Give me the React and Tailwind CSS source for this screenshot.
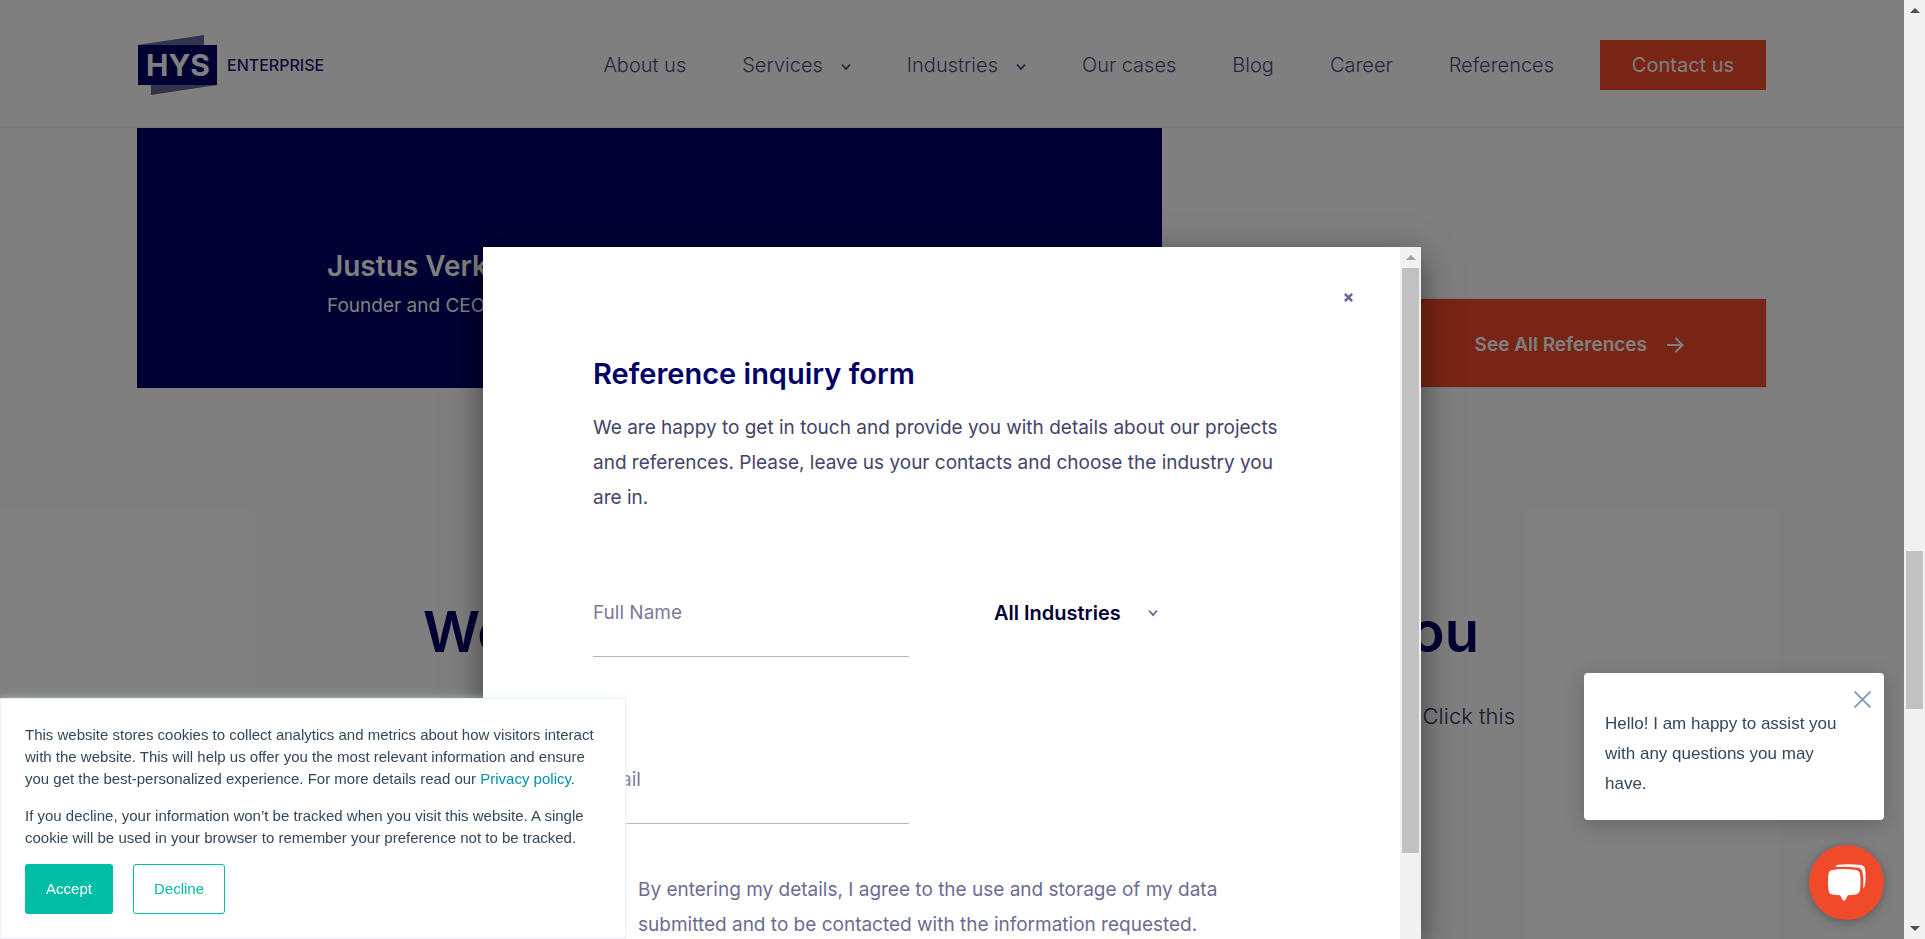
import React from "react";

const navItems = [
  { label: "About us" },
  { label: "Services", menu: true },
  { label: "Industries", menu: true },
  { label: "Our cases" },
  { label: "Blog" },
  { label: "Career" },
  { label: "References" },
];

function Chevron({ className }) {
  return (
    <svg viewBox="0 0 10 8" className={className} fill="none" stroke="currentColor" strokeWidth="1.8" aria-hidden="true">
      <path d="M1 1.5 L5 6.2 L9 1.5" />
    </svg>
  );
}

function Logo() {
  return (
    <a href="#home" className="block" aria-label="HYS Enterprise">
      <svg viewBox="0 0 192 60" className="block h-[60px] w-[192px]">
        <path d="M0 10 L66 0 V10 Z" fill="#666699" />
        <path d="M13 50 H79 L13 60 Z" fill="#666699" />
        <rect x="0" y="10" width="79" height="40" fill="#000066" />
        <text x="40" y="41" textAnchor="middle" fontFamily="Inter, sans-serif" fontWeight="700" fontSize="30" fill="#ffffff">
          HYS
        </text>
        <text x="89" y="36" fontFamily="Inter, sans-serif" fontWeight="500" fontSize="16" fill="#1a1a70">
          ENTERPRISE
        </text>
      </svg>
    </a>
  );
}

function Header() {
  return (
    <header className="flex h-32 shrink-0 items-center justify-between border-b border-[#f2f2f2] px-[138px] pb-[2px] pt-1">
      <Logo />
      <nav className="flex items-center gap-[46px]">
        <ul className="flex items-center gap-14 text-[20px] font-light leading-6 text-[#4d4d80]">
          {navItems.map((item) => (
            <li key={item.label}>
              <a href="#nav" className="flex items-center gap-[18px] whitespace-nowrap">
                {item.label}
                {item.menu && <Chevron className="mt-1 h-2 w-[10px]" />}
              </a>
            </li>
          ))}
        </ul>
        <a
          href="#contact"
          className="flex h-[50px] w-[166px] items-center justify-center bg-[#f04a2a] text-[20px] text-white"
        >
          Contact us
        </a>
      </nav>
    </header>
  );
}

function PageContent() {
  return (
    <main className="flex flex-1 flex-col overflow-hidden">
      <section className="flex items-end justify-between px-[137px]">
        <div className="flex h-[260px] w-full max-w-[1025px] flex-col bg-[#000066] pl-[190px] pt-[118px] text-white">
          <p className="text-[28px] font-semibold leading-10">Justus Verkuijl</p>
          <p className="mt-1 text-[19px] leading-8">Founder and CEO</p>
        </div>
        <a
          href="#references"
          className="flex h-[90px] w-[400px] items-center justify-end gap-5 border border-[#e8e4f4] bg-[#f04a2a] pr-[82px] pt-1 text-[19px] font-semibold text-white"
        >
          See All References
          <svg viewBox="0 0 17 16" className="h-4 w-[17px]" fill="none" stroke="currentColor" strokeWidth="2" aria-hidden="true">
            <path d="M0 8 H15 M8.5 1 L15.5 8 L8.5 15" />
          </svg>
        </a>
      </section>
      <section className="mx-auto mt-52 w-full max-w-[1126px]">
        <h2 className="flex justify-between pl-[34px] pr-9 text-[56px] font-semibold leading-[72px] text-[#000066]">
          <span>We</span>
          <span>you</span>
        </h2>
        <p className="mt-8 text-right text-[22px] font-light leading-8 text-[#33335c]">Click this</p>
      </section>
    </main>
  );
}

function ScrollArrow({ up, className }) {
  return (
    <svg viewBox="0 0 10 5" className={className} fill="currentColor" aria-hidden="true">
      <path d={up ? "M0 5 L5 0 L10 5 Z" : "M0 0 L5 5 L10 0 Z"} />
    </svg>
  );
}

function PageScrollbar() {
  return (
    <div className="flex w-[21px] shrink-0 flex-col items-center justify-between bg-[#f1f1f1] py-2 text-[#505050]">
      <ScrollArrow up className="h-[5px] w-[10px]" />
      <div className="flex w-full flex-1 flex-col items-center">
        <div className="grow-[538]" />
        <div className="h-[158px] w-[17px] bg-[#c1c1c1]" />
        <div className="grow-[217]" />
      </div>
      <ScrollArrow className="h-[5px] w-[10px]" />
    </div>
  );
}

function InquiryDialog() {
  return (
    <div
      role="dialog"
      aria-labelledby="inquiry-title"
      className="flex w-[938px] overflow-hidden bg-white shadow-[0_10px_30px_rgba(0,0,0,0.5)]"
    >
      <div className="flex-1 px-[110px] pt-9">
        <div className="-mr-[75px] flex justify-end">
          <button type="button" aria-label="Close" className="flex h-7 w-[34px] items-center justify-center text-[#666699]">
            <svg viewBox="0 0 10 10" className="h-[9px] w-[9px]" stroke="currentColor" strokeWidth="2.8" aria-hidden="true">
              <path d="M1 1 L9 9 M9 1 L1 9" />
            </svg>
          </button>
        </div>
        <h1 id="inquiry-title" className="mt-[45px] text-[29px] font-semibold leading-9 text-[#000066]">
          Reference inquiry form
        </h1>
        <p className="mt-[18px] text-[19px] leading-[35px] text-[#444468]">
          We are happy to get in touch and provide you with details about our projects and references. Please, leave us your
          contacts and choose the industry you are in.
        </p>
        <form>
          <div className="mt-[54px] flex items-start gap-[85px]">
            <input
              type="text"
              aria-label="Full Name"
              placeholder="Full Name"
              className="h-[88px] w-[316px] border-b border-[#b3b3cc] bg-transparent text-[19px] text-[#33335c] placeholder:text-[#7a7a98]"
            />
            <div className="flex h-[88px] items-center gap-[27px]">
              <select aria-label="Industry" className="appearance-none bg-transparent text-[20px] font-semibold text-[#000033]">
                <option>All Industries</option>
              </select>
              <Chevron className="h-2 w-[10px] text-[#666699]" />
            </div>
          </div>
          <input
            type="email"
            aria-label="Email"
            placeholder="Email"
            className="mt-[79px] block h-[88px] w-[316px] border-b border-[#b3b3cc] bg-transparent text-[19px] text-[#33335c] placeholder:text-[#7a7a98]"
          />
          <label className="mt-12 flex items-start gap-[25px] text-[19px] leading-[35px] text-[#6c6c92]">
            <input type="checkbox" className="mt-2 h-5 w-5 shrink-0" />
            <span>
              By entering my details, I agree to the use and storage of my data submitted and to be contacted with the
              information requested.
            </span>
          </label>
        </form>
      </div>
      <div className="flex w-[21px] flex-col items-center bg-[#f1f1f1] pt-2 text-[#a3a3a3]">
        <ScrollArrow up className="h-[5px] w-[10px]" />
        <div className="mt-2 h-[585px] w-[17px] bg-[#c1c1c1]" />
      </div>
    </div>
  );
}

function CookieBanner() {
  return (
    <aside className="fixed bottom-0 left-0 w-[626px] border border-[#eaf0f6] bg-white px-6 pb-6 pt-[25px] font-['Liberation_Sans',Arial,sans-serif] text-[15px] leading-[22px] text-[#33475b] shadow-[0_0_8px_rgba(234,240,246,0.5)]">
      <p>
        This website stores cookies to collect analytics and metrics about how visitors interact with the website. This will
        help us offer you the most relevant information and ensure you get the best-personalized experience. For more details
        read our{" "}
        <a href="#privacy" className="text-[#0091ae]">
          Privacy policy
        </a>
        .
      </p>
      <p className="mt-[15px]">
        If you decline, your information won’t be tracked when you visit this website. A single cookie will be used in your
        browser to remember your preference not to be tracked.
      </p>
      <div className="mt-[15px] flex gap-5">
        <button type="button" className="h-[50px] w-[88px] rounded-[3px] bg-[#00bda5] text-white">
          Accept
        </button>
        <button type="button" className="h-[50px] w-[92px] rounded-[3px] border border-[#00bda5] text-[#00bda5]">
          Decline
        </button>
      </div>
    </aside>
  );
}

function ChatWidget() {
  return (
    <div className="fixed bottom-[19px] right-[41px] flex flex-col items-end gap-[25px] font-['Liberation_Sans',Arial,sans-serif]">
      <div className="relative w-[300px] rounded bg-white pb-[21px] pl-[21px] pr-8 pt-9 shadow-[0_5px_20px_rgba(0,0,0,0.2)]">
        <button type="button" aria-label="Dismiss" className="absolute right-[13px] top-[18px] text-[#7c98b6]">
          <svg viewBox="0 0 17 17" className="h-[17px] w-[17px]" stroke="currentColor" strokeWidth="1.8" aria-hidden="true">
            <path d="M0.5 0.5 L16.5 16.5 M16.5 0.5 L0.5 16.5" />
          </svg>
        </button>
        <p className="text-[17px] leading-[30px] text-[#33475b]">Hello! I am happy to assist you with any questions you may have.</p>
      </div>
      <button
        type="button"
        aria-label="Open chat"
        className="flex h-[75px] w-[75px] items-center justify-center rounded-full bg-[#f04a2a] shadow-[0_2px_12px_rgba(0,0,0,0.3)]"
      >
        <svg viewBox="0 0 38 38" className="h-[38px] w-[38px]" fill="#ffffff" aria-hidden="true">
          <path d="M4 6 Q10 5 16 5 Q22 5 28 6 Q31.500 6.500 32 10 Q33 18 32 26 Q31.500 29.500 28 30.500 L20 31.300 L17.300 36 Q16 37.500 14.800 36 L12 31.300 L4 30.500 Q1 30 0.500 26 Q-0.500 18 0.500 10 Q1 6.500 4 6 Z" />
          <path d="M7.500 3 Q8 1 10 0.800 Q22 -0.300 33 1 Q36.500 1.500 37 5 Q38.200 13 37 21 Q36.600 23.500 35 24.500 Q36 16 34.500 8 Q34 4.500 30 3.800 Q20 2.200 7.500 3 Z" />
        </svg>
      </button>
    </div>
  );
}

export default function App() {
  return (
    <div className="flex h-screen overflow-hidden bg-white font-['Inter','Noto_Sans',sans-serif]">
      <div className="relative flex min-w-0 flex-1 flex-col">
        <Header />
        <PageContent />
        <div className="absolute inset-0 flex justify-center overflow-hidden bg-black/50 pt-[247px]">
          <InquiryDialog />
        </div>
      </div>
      <PageScrollbar />
      <CookieBanner />
      <ChatWidget />
    </div>
  );
}
